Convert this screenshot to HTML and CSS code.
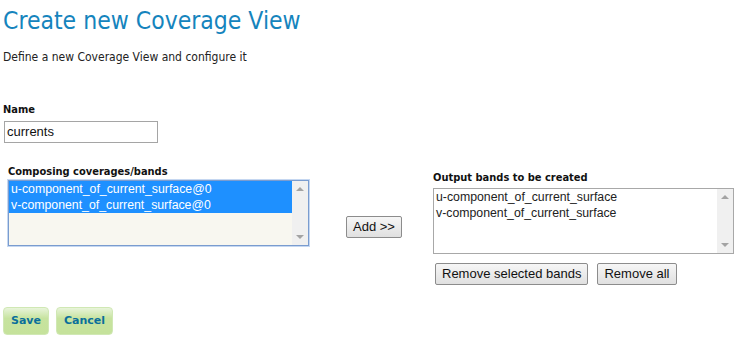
FILE: index.html
```html
<!DOCTYPE html>
<html>
<head>
<meta charset="utf-8">
<link rel="stylesheet" href="styles.css">
</head>
<body>
<div class="page">
  <h1 class="title">Create new Coverage View</h1>
  <p class="subtitle">Define a new Coverage View and configure it</p>

  <div class="name-field">
    <label class="lbl">Name</label>
    <div class="textinput">currents</div>
  </div>

  <div class="bands">
    <div class="col-left">
      <div class="lbl lbl-indent">Composing coverages/bands</div>
      <div class="listbox listbox-src">
        <div class="list-items">
          <div class="item sel">u-component_of_current_surface@0</div>
          <div class="item sel">v-component_of_current_surface@0</div>
        </div>
        <div class="scroll">
          <span class="arr up"></span>
          <span class="arr down"></span>
        </div>
      </div>
    </div>
    <div class="col-mid">
      <button class="btn">Add &gt;&gt;</button>
    </div>
    <div class="col-right">
      <div class="lbl">Output bands to be created</div>
      <div class="listbox listbox-out">
        <div class="list-items">
          <div class="item">u-component_of_current_surface</div>
          <div class="item">v-component_of_current_surface</div>
        </div>
        <div class="scroll">
          <span class="arr up"></span>
          <span class="arr down"></span>
        </div>
      </div>
      <div class="remove-row">
        <button class="btn">Remove selected bands</button>
        <button class="btn">Remove all</button>
      </div>
    </div>
  </div>

  <div class="actions">
    <a class="gbtn">Save</a>
    <a class="gbtn">Cancel</a>
  </div>
</div>
</body>
</html>
```

FILE: styles.css
```css
html, body {
  margin: 0;
  padding: 0;
  background: #ffffff;
}
.page {
  padding: 0 0 0 3px;
  font-family: "DejaVu Sans Condensed", "DejaVu Sans", sans-serif;
  color: #222222;
}
.title {
  margin: 6px 0 0 0;
  font-size: 24.5px;
  line-height: 30px;
  font-weight: normal;
  color: #1584bd;
}
.subtitle {
  margin: 14px 0 0 0;
  font-size: 12px;
  line-height: 14px;
}
.name-field {
  margin-top: 39px;
  display: flex;
  flex-direction: column;
  align-items: flex-start;
}
.lbl {
  display: block;
  font-weight: bold;
  font-size: 11px;
  line-height: 14px;
  color: #111111;
}
.lbl-indent {
  margin-left: 5px;
}
.textinput {
  margin-top: 4px;
  margin-left: 1px;
  width: 150px;
  height: 20px;
  border: 1px solid #a5a5a5;
  font-family: "Liberation Sans", Arial, sans-serif;
  font-size: 13px;
  line-height: 20px;
  padding-left: 2px;
  box-sizing: content-box;
  color: #111;
}
.bands {
  margin-top: 22px;
  display: flex;
  align-items: flex-start;
}
.col-left {
  display: flex;
  flex-direction: column;
}
.listbox {
  display: flex;
  box-sizing: border-box;
  font-family: "Liberation Sans", Arial, sans-serif;
  font-size: 12.3px;
  line-height: 16px;
}
.listbox-src {
  margin-top: 1px;
  margin-left: 5px;
  width: 301px;
  height: 66px;
  border: 1px solid #7a9ccf;
  box-shadow: 0 0 0 1px #c5d7f1;
  background: #f8f7f0;
}
.listbox-out {
  margin-top: 3px;
  width: 301px;
  height: 66px;
  border: 1px solid #a8a8a8;
  background: #ffffff;
}
.list-items {
  flex: 1;
}
.item {
  padding-left: 2px;
  height: 16px;
  white-space: nowrap;
  color: #222;
}
.item.sel {
  background: #1e90ff;
  color: #ffffff;
}
.scroll {
  width: 16px;
  background: #f0f0f0;
  display: flex;
  flex-direction: column;
  justify-content: space-between;
  align-items: center;
  padding: 6px 0 6px 0;
}
.arr {
  width: 0;
  height: 0;
  border-left: 4px solid transparent;
  border-right: 4px solid transparent;
}
.arr.up {
  border-bottom: 4px solid #a3a3a3;
}
.arr.down {
  border-top: 4px solid #a3a3a3;
}
.col-mid {
  padding: 51px 0 0 37px;
  width: 87px;
}
.col-right {
  padding-top: 6px;
  display: flex;
  flex-direction: column;
  align-items: flex-start;
}
.btn {
  font-family: "Liberation Sans", Arial, sans-serif;
  font-size: 13px;
  line-height: 16px;
  padding: 2px 6px 2px 6px;
  border: 1px solid #8c8c8c;
  border-radius: 2px;
  background: linear-gradient(#f6f6f6, #e0e0e0);
  color: #111;
  margin: 0;
}
.remove-row {
  margin-top: 9px;
  margin-left: 2px;
  display: flex;
  gap: 9px;
}
.actions {
  margin-top: 22px;
  display: flex;
  gap: 7px;
}
.gbtn {
  display: block;
  height: 26px;
  line-height: 26px;
  padding: 0 7px;
  border: 1px solid #d0e8b4;
  border-radius: 4px;
  background: linear-gradient(#e8f4da 0%, #c7e39f 40%, #c5e29b 100%);
  font-family: "DejaVu Sans", sans-serif;
  font-weight: bold;
  font-size: 11px;
  color: #0b6f9b;
}
```
